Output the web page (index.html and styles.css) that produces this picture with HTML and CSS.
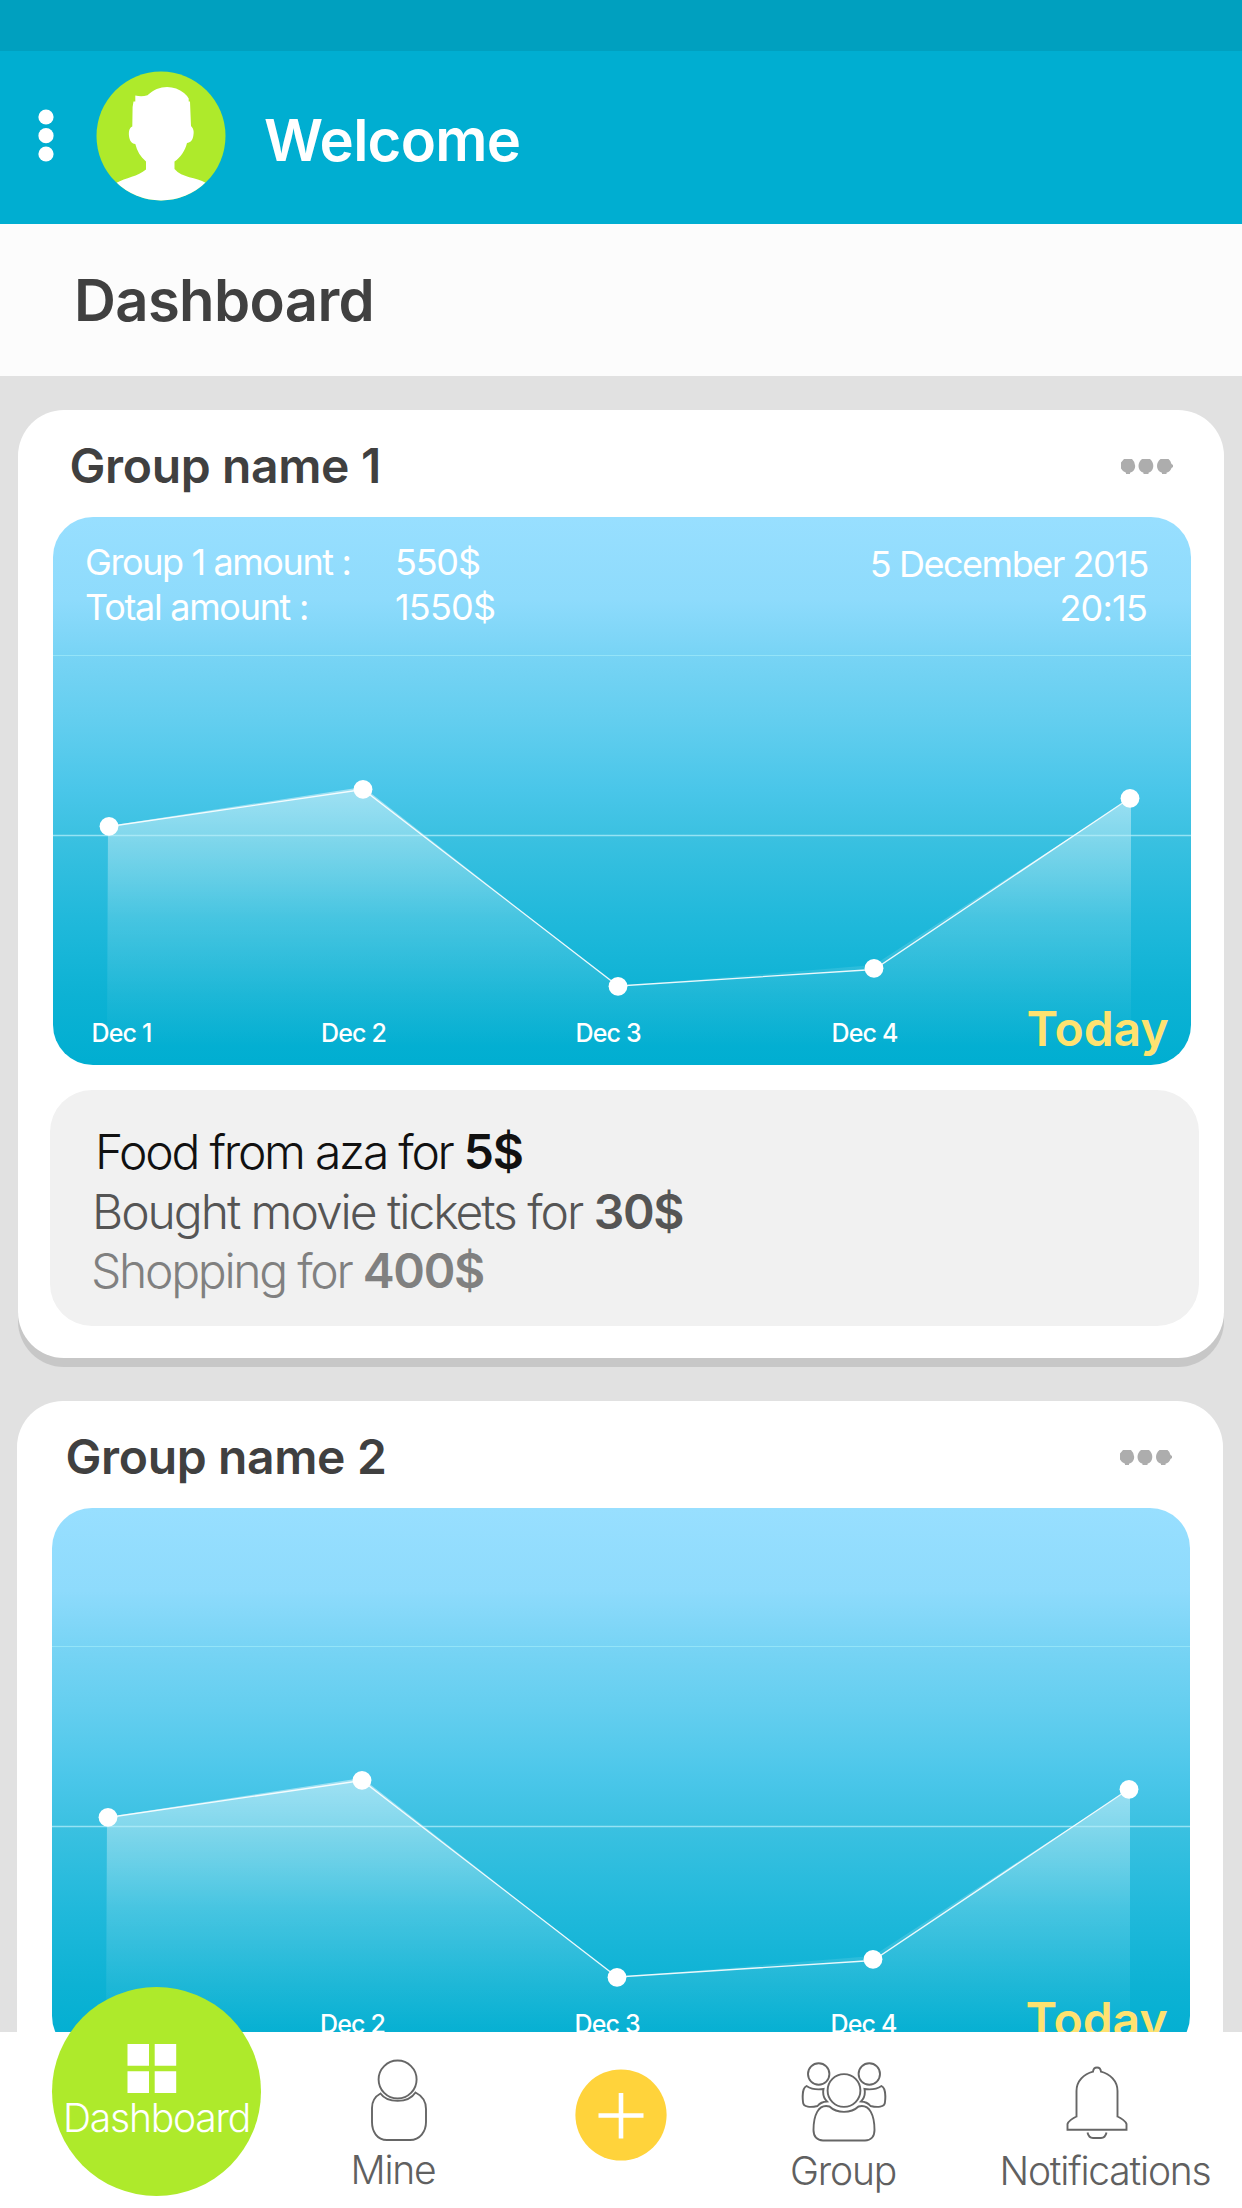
FILE: index.html
```html
<!DOCTYPE html>
<html lang="en">
<head>
<meta charset="utf-8">
<title>Dashboard</title>
<link rel="stylesheet" href="styles.css">
</head>
<body>
<svg class="defs" width="0" height="0" aria-hidden="true">
  <defs>
    <linearGradient id="fade" gradientUnits="userSpaceOnUse" x1="0" y1="272" x2="0" y2="530">
      <stop offset="0" stop-color="#fff" stop-opacity=".47"/>
      <stop offset=".2" stop-color="#fff" stop-opacity=".35"/>
      <stop offset=".5" stop-color="#fff" stop-opacity=".17"/>
      <stop offset="1" stop-color="#fff" stop-opacity="0"/>
    </linearGradient>
    <symbol id="plot" viewBox="0 0 1138 548">
      <path d="M55 309 310 270 565 469 821 448 1078 281V530H54Z" fill="url(#fade)"/>
      <path d="M0 138.5H1138" stroke="#94e4f8" stroke-width="1.2"/>
      <path d="M0 318.500H1138" stroke="#b4eefa" stroke-opacity=".75" stroke-width="1.3"/>
      <path d="M56 309.500 310 272.500 565 469 821 452.500 1077 281" fill="none" stroke="#fff" stroke-opacity=".9" stroke-width="1.3"/>
      <g fill="#fff">
        <circle cx="56" cy="309.300" r="9.400"/>
        <circle cx="310" cy="272.300" r="9.400"/>
        <circle cx="565" cy="469.300" r="9.400"/>
        <circle cx="821" cy="451.300" r="9.400"/>
        <circle cx="1077" cy="281.300" r="9.400"/>
      </g>
    </symbol>
    <symbol id="more" viewBox="0 0 52 16">
      <g fill="#adadad">
        <path d="M3 0H11Q14.200 3 14.200 7 14.200 12 9 13.700V15H5V13.700Q1.500 12.500 0 9.500V3.500Z"/>
        <path d="M21 0H29Q32.300 3 32.300 7 32.300 12 27.500 13.700V15H22.500V13.700Q17.500 12 17.500 7 17.500 3 21 0Z"/>
        <path d="M39.500 0H47.500Q50 2 50.500 5L52 6V8L50.500 9Q49.500 12.500 45.500 13.700V15H41V13.700Q36 12 36 7 36 3 39.500 0Z"/>
      </g>
    </symbol>
  </defs>
</svg>

<div class="screen">
  <div class="status-bar"></div>
  <header class="app-bar">
    <svg class="menu" width="16" height="54" viewBox="0 0 16 54"><g fill="#fff"><circle cx="8" cy="8" r="7.600"/><circle cx="8" cy="26.700" r="7.600"/><circle cx="8" cy="45" r="7.600"/></g></svg>
    <svg class="avatar" width="130" height="130" viewBox="0 0 130 130">
      <clipPath id="disc"><circle cx="65" cy="65" r="64.500"/></clipPath>
      <circle cx="65" cy="65" r="64.500" fill="#aeea2b"/>
      <path clip-path="url(#disc)" fill="#fff" d="M39.300 24.500Q45.500 26 51.500 24.300C62 13.500 78 13.500 88 22Q91 24.500 92.700 27.500V30.500H94L95 55C98 58 98 61 97.300 65 96.500 69.500 94.500 71.500 91 72 89 80 84.500 86.500 78.500 90.500V98C86 107 100 106 110 112V130H20V112C30 106.500 42 105.500 50 98.500V90.500C44.500 86 41 80 39.300 73 35.500 72.500 33.500 69.500 33 65 32.600 60 33.500 56.500 36.300 55.500L36.600 36 37.500 30.500H39.300Z"/>
    </svg>
    <h1 class="welcome">Welcome</h1>
  </header>
  <div class="title-bar"><h2 class="page-title">Dashboard</h2></div>

  <main class="feed">
    <section class="card">
      <div class="card-head">
        <h3 class="group-name">Group name 1</h3>
        <svg class="more" width="52" height="16"><use href="#more"/></svg>
      </div>
      <div class="chart">
        <svg class="plot" width="1138" height="548"><use href="#plot"/></svg>
        <div class="chart-head">
          <dl class="amounts">
            <dt class="a1">Group 1 amount :</dt><dd class="v1">550$</dd>
            <dt class="a2">Total amount :</dt><dd class="v2">1550$</dd>
          </dl>
          <div class="date"><span class="day">5 December 2015</span><span class="time">20:15</span></div>
        </div>
        <div class="axis"><span>Dec 1</span><span>Dec 2</span><span>Dec 3</span><span>Dec 4</span><span class="today">Today</span></div>
      </div>
      <ul class="expenses">
        <li class="e1">Food from aza for <b>5$</b></li>
        <li class="e2">Bought movie tickets for <b>30$</b></li>
        <li class="e3">Shopping for <b>400$</b></li>
      </ul>
    </section>

    <section class="card second">
      <div class="card-head">
        <h3 class="group-name">Group name 2</h3>
        <svg class="more" width="52" height="16"><use href="#more"/></svg>
      </div>
      <div class="chart">
        <svg class="plot" width="1138" height="548"><use href="#plot"/></svg>
        <div class="axis"><span></span><span>Dec 2</span><span>Dec 3</span><span>Dec 4</span><span class="today">Today</span></div>
      </div>
    </section>
  </main>

  <nav class="tabs">
    <a class="tab active">
      <svg class="tiles" width="50" height="50" viewBox="0 0 50 50"><path fill="#fff" d="M.5 0H22V21.700H.5ZM27.700 0H49.200V21.700H27.700ZM.5 27.300H22V49H.5ZM27.700 27.300H49.200V49H27.700Z"/></svg>
      <span class="label l-dash">Dashboard</span>
    </a>
    <a class="tab mine">
      <svg width="58" height="84" viewBox="0 0 58 84" fill="none" stroke="#666" stroke-width="1.900">
        <circle cx="27.600" cy="21.500" r="19"/>
        <path d="M10.500 35.500C17 45 38 46 45.500 34.500 52.500 38 56 43.500 56 51V64C56 73.500 50 82 40 82H17C7 82 2 73.500 2 64V50C2 43.500 5 38.500 10.500 35.500Z"/>
      </svg>
      <span class="label l-mine">Mine</span>
    </a>
    <a class="tab add">
      <svg width="92" height="92" viewBox="0 0 92 92"><circle cx="46" cy="46" r="45.600" fill="#ffd33b"/><path d="M23.500 46.500H68.500M46 24V69.500" stroke="#fff" stroke-width="4.600"/></svg>
    </a>
    <a class="tab group">
      <svg width="86" height="80" viewBox="0 0 86 80" fill="none" stroke="#666" stroke-width="1.900">
        <circle cx="17.700" cy="12" r="10.700"/><circle cx="68.300" cy="12" r="10.700"/>
        <circle cx="43" cy="28.500" r="16.400"/>
        <path d="M5.500 24C10 27 16 28 22.500 27 21.500 32 22.500 36 26 39.500 21 39.700 18.500 41.500 16.500 44 10 45.500 2 45.500 2 40 1.200 33 2 25.500 5.500 24Z"/>
        <path d="M80.500 24C76 27 70 28 63.500 27 64.500 32 63.500 36 60 39.500 65 39.700 67.500 41.500 69.500 44 76 45.500 84 45.500 84 40 84.800 33 84 25.500 80.500 24Z"/>
        <path d="M28.500 44.500C36 51.700 50 51.700 57.500 44.500 69 41.500 73.500 54 73.500 68 73.500 74.500 70 78.500 64 78.500H22C16 78.500 12.500 74.500 12.500 68 12.500 54 17 41.500 28.500 44.500Z"/>
      </svg>
      <span class="label l-group">Group</span>
    </a>
    <a class="tab bell">
      <svg width="62" height="74" viewBox="0 0 62 74" fill="none" stroke="#666" stroke-width="1.900">
        <path d="M1.500 63.800H60.500V58C60 55.500 55 52 51.500 50.500V25C51.500 15 44 8 35 5.700 34.500 0 27.500 0 27 5.700 18 8 10.500 15 10.500 25V50.500C7 52 2 55.500 1.500 58Z"/>
        <path d="M21.500 66.500C22.500 71 25 72 27 72H35C37 72 39.500 71 40.500 66.500"/>
      </svg>
      <span class="label l-bell">Notifications</span>
    </a>
  </nav>
</div>
</body>
</html>
```

FILE: styles.css
```css
* { box-sizing: border-box; margin: 0; padding: 0; }
body { font-family: Inter, "Liberation Sans", sans-serif; background: #e1e1e1; }
svg { display: block; flex: none; }
.defs { position: absolute; }
.screen { width: 1242px; height: 2208px; display: flex; flex-direction: column; overflow: hidden; }

.status-bar { flex: none; height: 51px; background: #00a0bf; }
.app-bar { flex: none; height: 173px; background: #00aed1; display: flex; align-items: center; padding-left: 37.500px; }
.menu { margin-top: -4px; }
.avatar { margin: -4px 0 0 42px; }
.welcome { margin: 4px 0 0 38.500px; font-size: 58px; font-weight: 600; color: #fff; white-space: nowrap; letter-spacing: -.7px; }
.title-bar { flex: none; height: 152px; background: #fcfcfc; display: flex; align-items: center; padding-left: 74px; }
.page-title { font-size: 58px; font-weight: 600; color: #404040; letter-spacing: -.65px; }

.feed { flex: 1; min-height: 0; overflow: hidden; padding: 34px 18px 0; }
.card { width: 1206px; height: 947.500px; background: #fff; border-radius: 46px; box-shadow: 0 9px 0 #c7c7c7; padding: 0 25px 0 35px; margin-bottom: 43.500px; }
.second { margin-left: -1px; }
.card-head { height: 107px; display: flex; align-items: center; justify-content: space-between; padding: 4px 26px 0 16.500px; }
.group-name { font-size: 48px; font-weight: 600; color: #404040; letter-spacing: -.35px; white-space: nowrap; }
.second .group-name { margin-left: -3px; }
.more { margin-top: 2px; }

.chart { position: relative; width: 1138px; height: 548px; border-radius: 40px; padding: 24px 44px 0 32px; display: flex; flex-direction: column; justify-content: space-between;
  background: linear-gradient(#98dfff 0, #8edbfc 15%, #78d4f5 25%, #63ceef 37%, #49c6e9 50%, #3bc1e1 58%, #21b9db 73%, #0db2d4 87%, #00aed1 100%); }
.second .chart { justify-content: flex-end; }
.plot { position: absolute; left: 0; top: 0; }
.chart-head { position: relative; display: flex; justify-content: space-between; font-size: 36px; font-weight: 400; line-height: 43.500px; color: #fff; white-space: nowrap; }
.amounts { display: grid; grid-template-columns: 310px auto; }
.a1 { letter-spacing: -1.400px; }
.a2 { letter-spacing: -1.300px; }
.v1 { letter-spacing: -1.200px; }
.v2 { letter-spacing: -.8px; }
.date { display: flex; flex-direction: column; align-items: flex-end; padding-top: 2px; }
.day { letter-spacing: -1.450px; margin-right: -1px; }
.time { letter-spacing: -.8px; }
.axis { position: relative; display: grid; grid-template-columns: 229.500px 254.500px 256px 195px 1fr; height: 69px; margin-left: 6.500px; font-size: 25px; font-weight: 550; line-height: 75px; letter-spacing: -.85px; color: #fff; white-space: nowrap; }
.today { font-size: 48px; font-weight: 600; line-height: 66px; letter-spacing: 0; color: #ffe270; }

.expenses { list-style: none; width: 1149px; height: 236px; margin: 25px 0 0 -3px; padding: 32px 0 0 43px; border-radius: 42px; background: #f1f1f1; font-size: 48px; font-weight: 300; line-height: 59.500px; white-space: nowrap; }
.expenses b { font-weight: 600; letter-spacing: -1.300px; }
.e1 { color: #111; margin-left: 2px; letter-spacing: -2.250px; }
.e2 { color: #555; margin-left: -1px; letter-spacing: -2.040px; }
.e3 { color: #808080; margin-left: -2px; letter-spacing: -2.280px; }

.tabs { flex: none; position: relative; height: 176px; background: #fff; display: grid; grid-template-columns: 313px 162px 292px 154px 321px; }
.tab { display: flex; flex-direction: column; align-items: center; color: #606060; }
.label { font-size: 39px; font-weight: 300; line-height: 46px; letter-spacing: -1.200px; white-space: nowrap; }
.active { justify-self: center; width: 209px; height: 209px; margin-top: -45px; border-radius: 50%; background: #aeea2b; color: #fff; padding-top: 57px; }
.tiles { margin-left: -9px; }
.l-dash { margin-top: 1px; }
.mine { padding-top: 26px; }
.mine svg { margin-left: 9px; }
.l-mine { margin-top: 5px; margin-left: -2px; }
.add { padding-top: 37px; }
.group { padding-top: 30px; }
.l-group { margin-top: 6px; margin-left: -2px; }
.bell { padding: 34px 0 0 49px; }
.bell svg { margin-left: -18px; }
.l-bell { margin-top: 8px; margin-left: -2px; }
```
